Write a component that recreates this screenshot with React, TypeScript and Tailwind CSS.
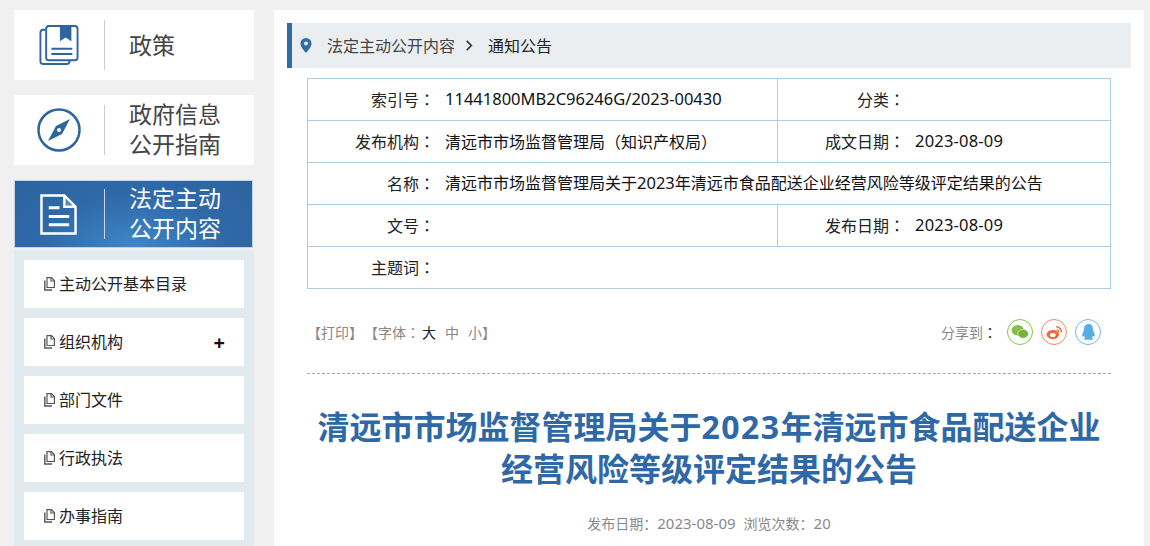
const font = "font-['Noto_Sans','Noto_Sans_CJK_SC',sans-serif]";

function BookIcon() {
  return (
    <svg viewBox="0 0 42 44" className="h-[42px] w-[40px]" fill="none" stroke="#2e659f" strokeWidth="2">
      <path d="M7 6H4.500Q1.500 6 1.500 9V39Q1.500 42 4.500 42H29Q32 42 32 39V38" />
      <rect x="7.500" y="2" width="33" height="36" rx="3" />
      <path d="M22 2h12v16l-6-4-6 4z" fill="#2e659f" stroke="none" />
      <path d="M13 26h22M13 31.500h22" strokeWidth="2" />
    </svg>
  );
}

function CompassIcon() {
  return (
    <svg viewBox="0 0 44 44" className="h-[44px] w-[44px]">
      <circle cx="22" cy="22" r="20.500" fill="none" stroke="#2e659f" strokeWidth="2.500" />
      <path d="M33 11 19 18 11 33 25 26z" fill="#2e659f" />
      <circle cx="22" cy="22" r="2" fill="#fff" />
    </svg>
  );
}

function DocIcon() {
  return (
    <svg viewBox="0 0 38 42" className="h-[41px] w-[37px]" fill="none" stroke="#fff" strokeWidth="2.500">
      <path d="M1.500 1.500H25L36.500 13V40.500H1.500z" />
      <path d="M25 1.500V13H36.500" fill="#fff" fillOpacity="0.2" />
      <path d="M9 14h11M9 23h21M9 31.500h21" strokeWidth="3" />
    </svg>
  );
}

function PageIcon() {
  return (
    <svg viewBox="0 0 11 14" className="h-[14px] w-[11px] shrink-0" fill="none" stroke="#555" strokeWidth="1.200">
      <path d="M3 .6h4.500L10.400 3.500V10.500H3z" />
      <path d="M7 .6v3.400h3.400" />
      <path d="M.8 3.500V13H8" strokeWidth="1.400" />
    </svg>
  );
}

// the TC face centres full-width punctuation, as the reference does
function Punct({ children, className }: { children: React.ReactNode; className?: string }) {
  return <span className={`font-['Noto_Sans_CJK_TC',sans-serif] ${className ?? ""}`}>{children}</span>;
}

function Nav({ icon, lines }: { icon: React.ReactNode; lines: string[] }) {
  return (
    <div className="flex h-[70px] items-center bg-white">
      <div className="flex w-[90px] shrink-0 justify-center">{icon}</div>
      <div className="h-[50px] w-px shrink-0 bg-[#cccccc]" />
      <div className={lines.length > 1 ? "-mt-[2px] pl-[24px] text-[23px] leading-[30px] text-[#444444]" : "pl-[24px] text-[23px] leading-[30px] text-[#444444]"}>
        {lines.map((l) => (
          <div key={l}>{l}</div>
        ))}
      </div>
    </div>
  );
}

function Item({ label, plus }: { label: string; plus?: boolean }) {
  return (
    <div className="flex h-[48px] items-center justify-between bg-white pl-[20px] pr-[19px]">
      <div className="flex items-center gap-[4px] text-[16px] text-[#222222]">
        <PageIcon />
        <span>{label}</span>
      </div>
      {plus && <span className="mt-[2px] text-[20px] font-bold leading-none text-[#1a0a0a]">+</span>}
    </div>
  );
}

function Cell({ label, children }: { label: string; children?: React.ReactNode }) {
  return (
    <>
      <div className="w-[127px] shrink-0 whitespace-nowrap text-right text-[#222222]">
        {label}
        <Punct>：</Punct>
      </div>
      <div className="whitespace-nowrap pl-[10px] text-[#111111]">{children}</div>
    </>
  );
}

function Row({ children, last }: { children: React.ReactNode; last?: boolean }) {
  return (
    <div className={last ? "flex h-[41px] items-center text-[16px]" : "flex h-[42px] items-center border-b border-[#a9cde4] text-[16px]"}>
      {children}
    </div>
  );
}

function Split({ a, b }: { a: React.ReactNode; b: React.ReactNode }) {
  return (
    <>
      <div className="flex h-full w-[470px] shrink-0 items-center border-r border-[#a9cde4]">{a}</div>
      <div className="flex h-full items-center">{b}</div>
    </>
  );
}

function Latin({ children }: { children: React.ReactNode }) {
  return <span className="text-[16.500px] tracking-[0.2px]">{children}</span>;
}

function ShareCircle({ color, children }: { color: string; children: React.ReactNode }) {
  return (
    <span className={`flex h-[26px] w-[26px] items-center justify-center rounded-full border ${color}`}>{children}</span>
  );
}

export default function App() {
  return (
    <div className={`flex h-[546px] w-[1150px] gap-[20px] overflow-hidden bg-[#f0f0f0] pl-[14px] pt-[10px] ${font}`}>
      <aside className="flex w-[240px] shrink-0 flex-col">
        <Nav icon={<BookIcon />} lines={["政策"]} />
        <div className="h-[15px]" />
        <Nav icon={<CompassIcon />} lines={["政府信息", "公开指南"]} />
        <div className="h-[15px]" />
        <div className="flex h-[68px] w-[239px] items-center border border-[#c3d5e4] bg-[radial-gradient(ellipse_at_50%_100%,#3f86c9_0%,#2f69a8_55%,#2c649f_100%)]">
          <div className="flex w-[89px] shrink-0 justify-center pr-[2px]">
            <DocIcon />
          </div>
          <div className="h-[50px] w-px shrink-0 bg-[#c9d6e2]" />
          <div className="-mt-[2px] pl-[24px] text-[23px] leading-[30px] text-white">
            <div>法定主动</div>
            <div>公开内容</div>
          </div>
        </div>
        <div className="mt-[2px] flex flex-1 flex-col gap-[10px] bg-[#e0eaef] px-[10px] pt-[10px]">
          <Item label="主动公开基本目录" />
          <Item label="组织机构" plus />
          <Item label="部门文件" />
          <Item label="行政执法" />
          <Item label="办事指南" />
        </div>
      </aside>

      <main className="w-[870px] shrink-0 bg-white px-[13px] pt-[13px]">
        <div className="flex h-[45px] items-center border-l-[5px] border-[#2e6ca4] bg-[#ebeef1] text-[16px]">
          <svg viewBox="0 0 12 15" className="ml-[8px] h-[15px] w-[12px]">
            <path fillRule="evenodd" d="M6 0a5.500 5.500 0 0 1 5.500 5.500C11.500 9 8 12.500 6 15 4 12.500.5 9 .5 5.500A5.500 5.500 0 0 1 6 0zm0 3.500a2 2 0 1 0 0 4 2 2 0 0 0 0-4z" fill="#2e6ca4" />
          </svg>
          <span className="ml-[15px] pt-[1px] text-[#444444]">法定主动公开内容</span>
          <svg viewBox="0 0 8 12" className="ml-[10px] h-[11px] w-[8px]" fill="none" stroke="#333" strokeWidth="1.800">
            <path d="M1.500 1 6.500 6 1.500 11" />
          </svg>
          <span className="ml-[15px] pt-[1px] text-[#222222]">通知公告</span>
        </div>

        <div className="ml-[20px] mt-[10px] w-[804px] border border-[#a9cde4]">
          <Row>
            <Split a={<Cell label="索引号"><span className="text-[16.500px]">11441800MB2C96246G/2023-00430</span></Cell>} b={<Cell label="分类" />} />
          </Row>
          <Row>
            <Split
              a={
                <Cell label="发布机构">
                  清远市市场监督管理局<Punct>（</Punct>知识产权局<Punct>）</Punct>
                </Cell>
              }
              b={<Cell label="成文日期"><Latin>2023-08-09</Latin></Cell>}
            />
          </Row>
          <Row>
            <Cell label="名称">
              清远市市场监督管理局关于<span className="text-[16.500px]">2023</span>年清远市食品配送企业经营风险等级评定结果的公告
            </Cell>
          </Row>
          <Row>
            <Split a={<Cell label="文号" />} b={<Cell label="发布日期"><Latin>2023-08-09</Latin></Cell>} />
          </Row>
          <Row last>
            <Cell label="主题词" />
          </Row>
        </div>

        <div className="ml-[20px] flex h-[85px] w-[804px] items-center justify-between border-b border-dashed border-[#aaaaaa] pr-[10px] pt-[2px] text-[14px] text-[#888888]">
          <div className="flex items-center">
            <span>【打印】</span>
            <span className="ml-[1px]">
              【字体
              <Punct>：</Punct>
            </span>
            <span className="ml-[2px] text-[#222222]">大</span>
            <span className="ml-[9px]">中</span>
            <span className="ml-[9px]">小</span>
            <span>】</span>
          </div>
          <div className="flex items-center gap-[8px]">
            <span className="mr-[2px]">
              分享到
              <Punct className="text-[#222222]">：</Punct>
            </span>
            <ShareCircle color="border-[#8bc34a]">
              <svg viewBox="0 0 20 18" className="h-[16px] w-[18px]" fill="#86bd45">
                <ellipse cx="7.500" cy="7" rx="7" ry="6" />
                <ellipse cx="13.500" cy="11" rx="6" ry="5" fill="#74b338" stroke="#fff" strokeWidth="0.600" />
              </svg>
            </ShareCircle>
            <ShareCircle color="border-[#f58a5c]">
              <svg viewBox="0 0 20 18" className="h-[15px] w-[17px]">
                <ellipse cx="8" cy="11.500" rx="7.500" ry="5.500" fill="#f4693a" />
                <ellipse cx="8" cy="12" rx="3.500" ry="2.500" fill="#fff" />
                <path d="M12 2a6 6 0 0 1 6 7" fill="none" stroke="#f4693a" strokeWidth="1.800" />
                <path d="M12.500 5.500a2.500 2.500 0 0 1 2.500 3" fill="none" stroke="#f4693a" strokeWidth="1.400" />
              </svg>
            </ShareCircle>
            <ShareCircle color="border-[#6cbdec]">
              <svg viewBox="0 0 16 18" className="h-[17px] w-[15px]" fill="#56ace6">
                <path d="M8 0c3.200 0 4.800 2.500 4.800 5.500 0 1 .2 1.500.7 2.500.8 1.600 1.500 3.500 1 5-.4 1-1.300 0-1.700-.8-.2 1-.7 2-1.500 2.500.8.300 1.700.8 1.400 1.500-.3.600-2.500.8-4 .4-.5-.1-.9-.1-1.400 0-1.500.4-3.700.2-4-.4-.3-.7.6-1.200 1.400-1.500-.8-.5-1.300-1.500-1.500-2.500-.4.800-1.300 1.800-1.700.8-.5-1.500.2-3.400 1-5 .5-1 .7-1.500.7-2.500C3.200 2.500 4.800 0 8 0z" />
              </svg>
            </ShareCircle>
          </div>
        </div>

        <h1 className="ml-[20px] mt-[32px] w-[804px] text-center text-[32px] font-bold leading-[42px] text-[#2e68a7]">
          清远市市场监督管理局关于<span className="tracking-[1.500px]">2023</span>年清远市食品配送企业
          <br />
          经营风险等级评定结果的公告
        </h1>

        <div className="ml-[20px] mt-[22px] w-[804px] text-center text-[14px] text-[#888888]">
          发布日期：<span className="text-[15px]">2023-08-09</span>
          <span className="ml-[8px]">浏览次数：</span>
          <span className="text-[15px]">20</span>
        </div>
      </main>
    </div>
  );
}
